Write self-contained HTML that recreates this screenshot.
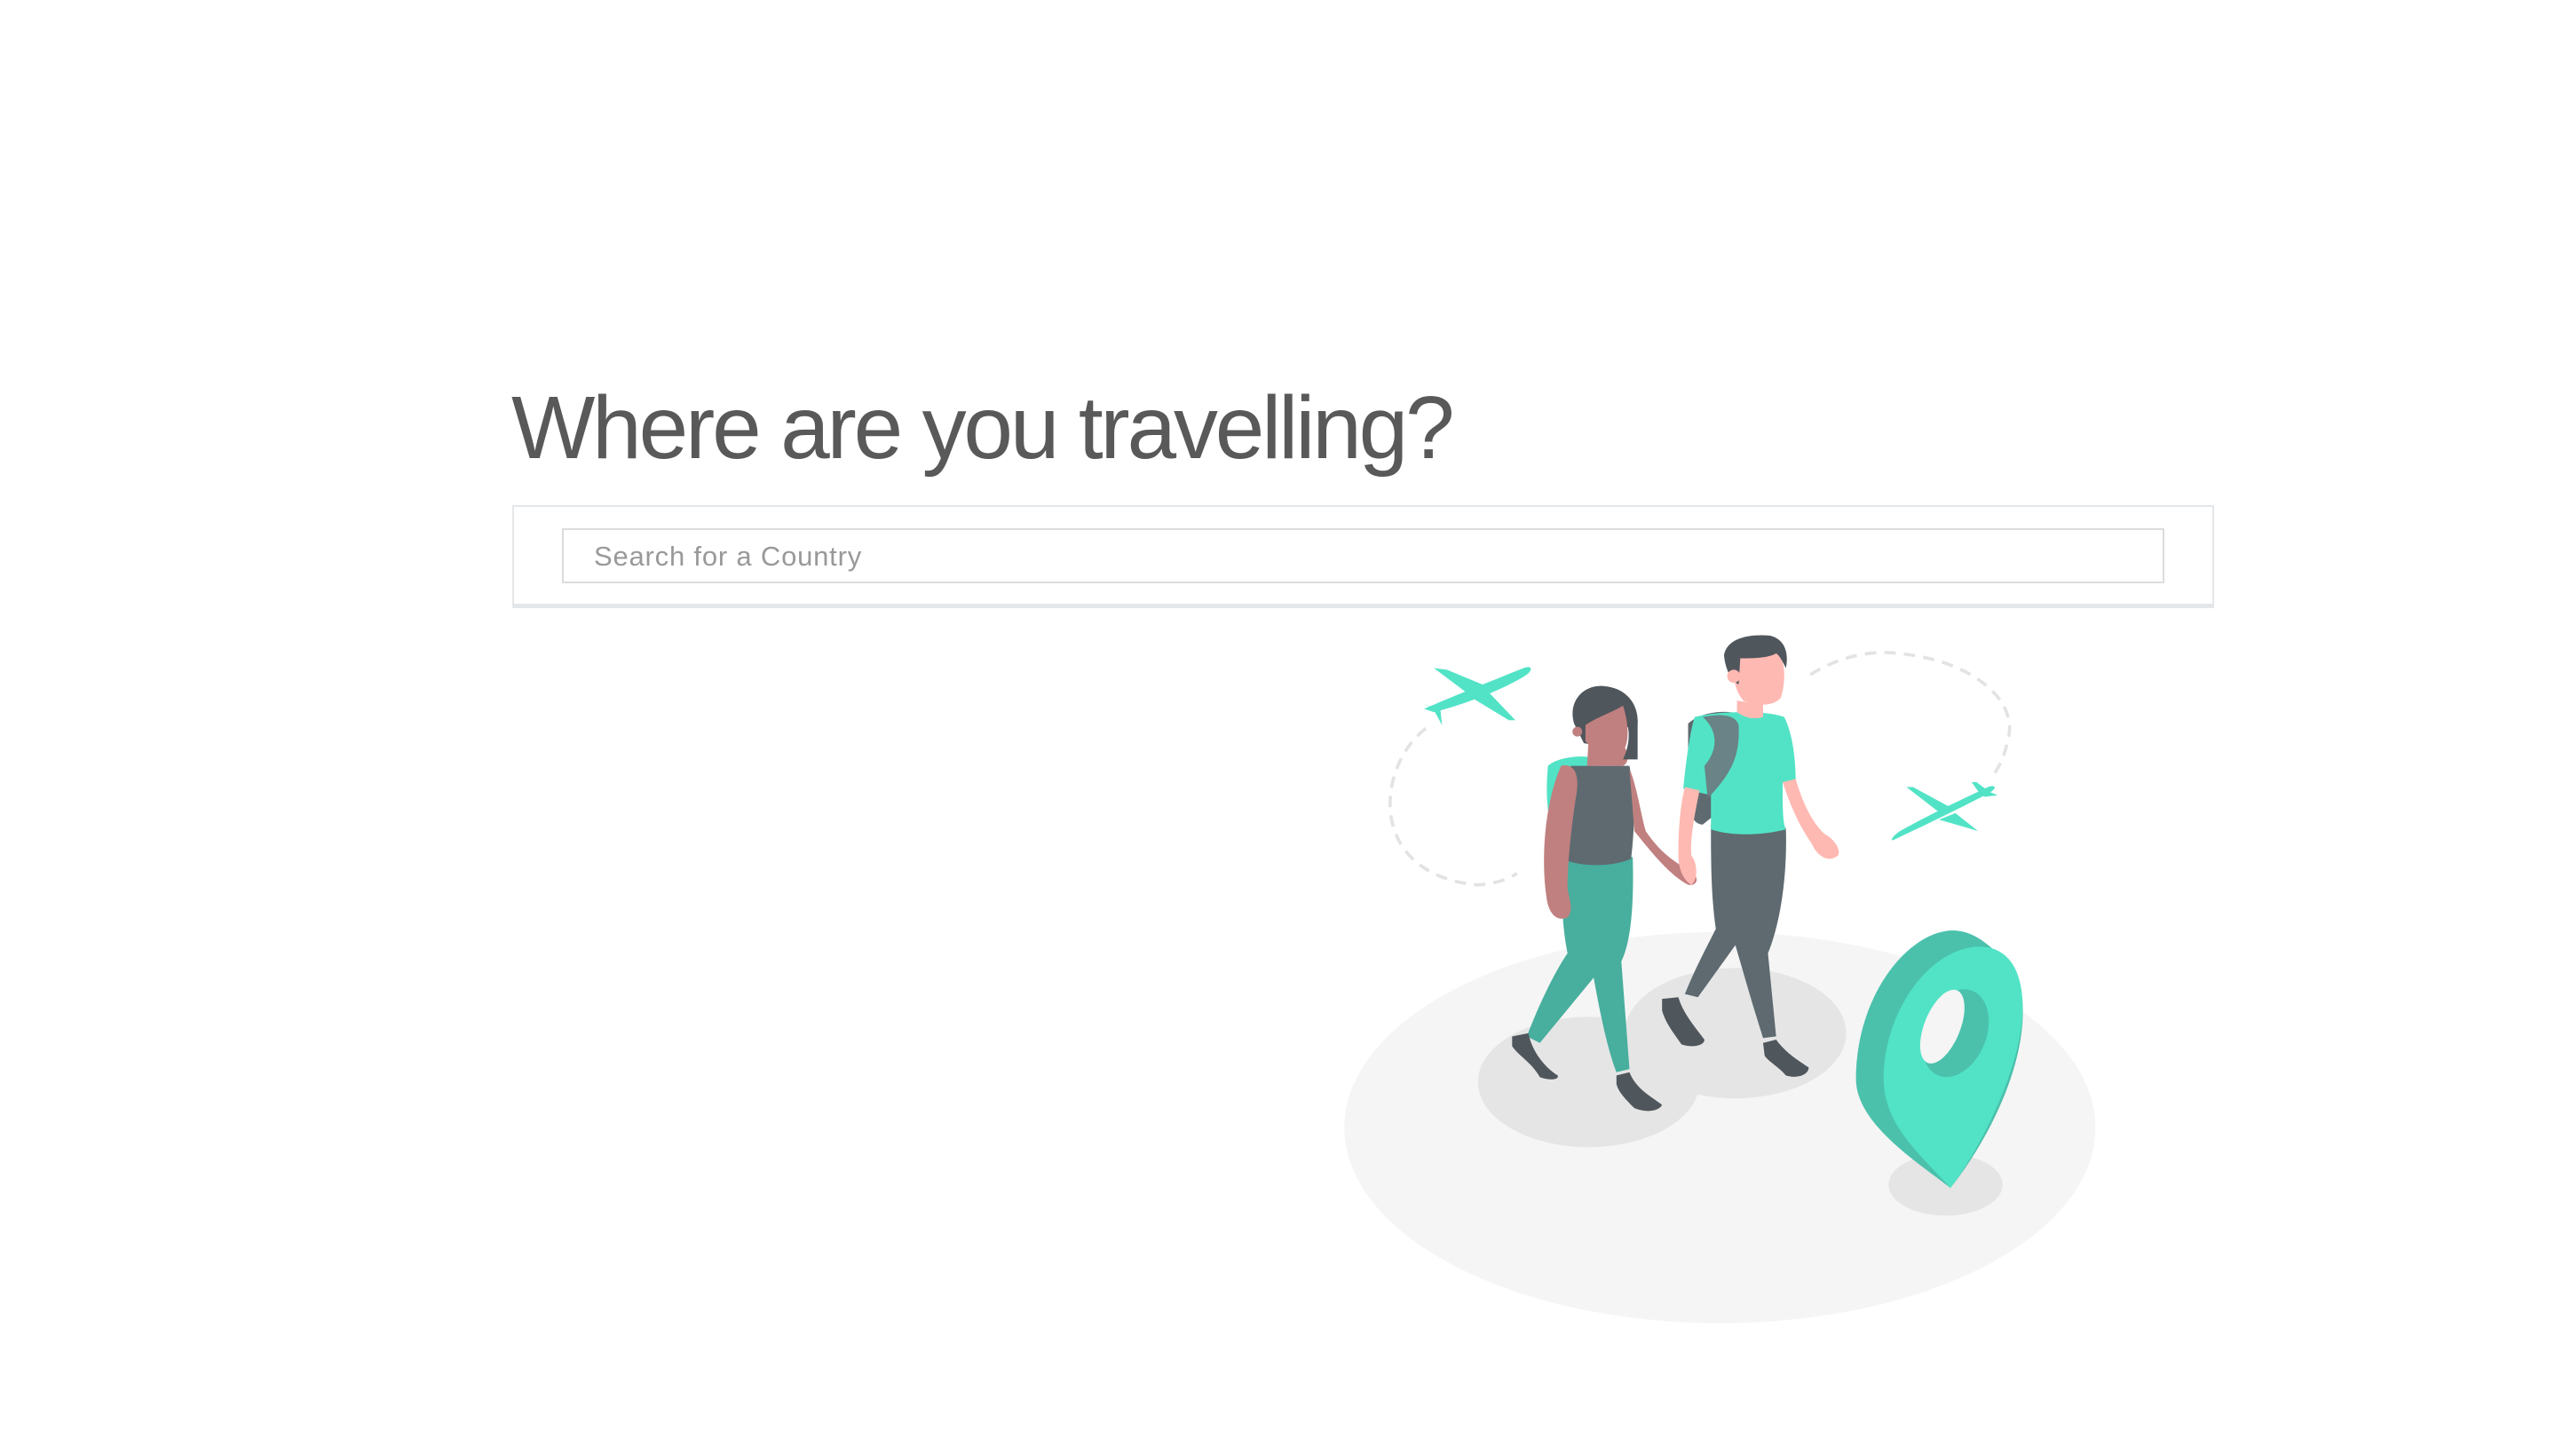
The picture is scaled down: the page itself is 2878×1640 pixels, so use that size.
<!DOCTYPE html>
<html><head><meta charset="utf-8"><style>
html,body{margin:0;padding:0;background:#fff;}
body{width:2878px;height:1640px;position:relative;overflow:hidden;font-family:"Liberation Sans",Arial,sans-serif;}
h1{position:absolute;left:576px;top:432px;margin:0;font-size:100px;line-height:100px;font-weight:normal;color:#595959;letter-spacing:-3.2px;white-space:nowrap;}
.box{position:absolute;left:577px;top:569px;width:1913px;height:109px;border:2px solid #e4e7ea;border-bottom-width:5px;background:#fff;}
.inp{position:absolute;left:633px;top:595px;width:1801px;height:58px;border:2px solid #dcdcdc;background:#fff;}
.ph{position:absolute;left:669px;top:611px;font-size:31px;line-height:31px;color:#999;white-space:nowrap;letter-spacing:0.8px;}
svg{position:absolute;left:0;top:0;}
</style></head><body>
<svg width="2878" height="1640" viewBox="0 0 1568 893.5">
  <ellipse cx="1055.5" cy="692" rx="230.5" ry="120" fill="#f5f5f5"/>
  <ellipse cx="975" cy="664" rx="68" ry="40" fill="#e5e5e5"/>
  <ellipse cx="1065" cy="634" rx="68" ry="40" fill="#e5e5e5"/>
  <ellipse cx="1194" cy="727" rx="35" ry="19" fill="#e5e5e5"/>
  <path d="M875,447 C845,470 838,535 905,543 C915,543 925,540 931,536" fill="none" stroke="#e3e3e3" stroke-width="2" stroke-dasharray="7 5"/>
  <path d="M1111,414 C1130,402 1150,399 1165,401 C1210,405 1240,430 1232,455 C1230,465 1226,472 1223,476" fill="none" stroke="#e3e3e3" stroke-width="2" stroke-dasharray="7 5"/>
  <g fill="#52e3c6">
    <path d="M874,435 C890,428 920,416 935,410 C940,408 941,411 937,414 C925,422 900,432 880,437 Z"/>
    <path d="M900,425 L880,410 L888,411 L912,421 Z"/>
    <path d="M910,421 L930,442 L926,442 L903,428 Z"/>
    <path d="M880,434 L873,432 L879,434 L885,445 L884,436 Z"/>
  </g>
  <g fill="#52e3c6">
    <path d="M1163,515 C1178,508 1205,495 1220,487 C1226,484 1225,481 1220,483 C1205,490 1180,502 1166,510 C1160,514 1160,517 1163,515 Z"/>
    <path d="M1192,500 L1170,483 L1174,483 L1198,496 Z"/>
    <path d="M1190,503 L1221,512 L1214,510 L1200,499 Z"/>
    <path d="M1215,487 L1210,480 L1213,480 L1221,486 L1226,488 L1218,489 Z"/>
  </g>
  <path d="M1139,662 C1139,612 1170,572 1198,571 C1210,571 1218,578 1226,585 L1241,612 C1245,652 1220,700 1197,729 C1178,714 1139,690 1139,662 Z" fill="#4bc1ac"/>
  <path d="M1156,662 C1156,620 1185,581 1215,581 C1235,581 1243,600 1241,625 C1238,660 1215,705 1197,729 C1178,708 1156,690 1156,662 Z" fill="#52e3c6"/>
  <ellipse cx="1200" cy="634" rx="19" ry="28" transform="rotate(22 1200 634)" fill="#4bc1ac"/>
  <ellipse cx="1192" cy="630" rx="11" ry="24" transform="rotate(22 1192 630)" fill="#f5f5f5"/>
  <path d="M950,470 C955,465 970,463 978,465 L976,522 L958,522 C950,510 948,490 950,470 Z" fill="#52e3c6"/>
  <path d="M960,520 L1002,526 C1003,560 1000,580 995,590 L1000,656 L992,658 C985,640 980,610 978,600 L945,640 L937,636 C945,615 955,595 962,585 C958,565 958,545 960,520 Z" fill="#48ae9e"/>
  <path d="M964,470 L1000,470 C1004,490 1003,510 1001,527 C990,532 972,532 961,528 C963,510 962,490 964,470 Z" fill="#5e6a70"/>
  <path d="M958,470 C966,468 970,475 967,490 C964,510 962,530 962,545 C963,552 966,558 962,563 C955,566 950,560 949,550 C946,530 947,495 958,470 Z" fill="#c0807f"/>
  <path d="M1000,472 C1004,480 1007,500 1010,510 C1020,525 1030,530 1038,535 C1043,538 1042,544 1036,543 C1025,537 1015,525 1003,510 Z" fill="#c0807f"/>
  <path d="M975,452 C980,450 990,453 995,455 C1000,462 1000,468 996,470 L974,470 Z" fill="#c0807f"/>
  <path d="M966,444 C962,430 972,420 984,421 C998,422 1006,432 1005,445 L1005,466 L996,466 C1000,458 1000,450 999,446 C990,455 980,458 972,456 Z" fill="#4f565c"/>
  <path d="M973,445 C980,440 990,437 996,433 C1000,445 1000,458 995,462 C985,464 978,460 973,455 Z" fill="#c0807f"/>
  <circle cx="968" cy="449" r="3" fill="#c0807f"/>
  <path d="M928,636 L938,634 C940,645 948,655 956,660 C957,663 950,663 945,661 C940,652 932,648 928,642 Z" fill="#4f565c"/>
  <path d="M992,660 L1000,658 C1004,668 1012,672 1020,678 C1018,682 1010,683 1003,680 C998,675 993,670 992,665 Z" fill="#4f565c"/>
  <path d="M1036,444 C1045,436 1060,436 1067,438 L1067,490 C1060,495 1052,500 1045,506 C1040,506 1036,500 1036,490 Z" fill="#5e6a70"/>
  <path d="M1050,506 L1096,508 C1097,540 1092,568 1085,585 L1090,636 L1082,637 C1075,615 1068,590 1065,580 L1042,612 L1034,610 C1040,595 1048,580 1053,570 C1050,550 1050,525 1050,506 Z" fill="#5e6a70"/>
  <path d="M1040,440 C1055,436 1085,436 1095,440 C1100,450 1102,465 1102,480 L1094,480 C1094,495 1094,505 1096,509 C1080,513 1062,513 1050,509 L1050,488 L1033,484 C1035,465 1037,450 1040,440 Z" fill="#52e3c6"/>
  <path d="M1045,440 C1055,438 1065,438 1067,445 C1068,465 1062,475 1048,490 L1046,470 C1053,462 1056,450 1045,440 Z" fill="#6b787e" opacity="0.9"/>
  <path d="M1034,483 L1043,485 C1040,500 1037,515 1038,525 C1042,530 1042,540 1038,543 C1033,540 1030,533 1030,525 C1030,510 1031,495 1034,483 Z" fill="#ffb9b3"/>
  <path d="M1094,480 L1102,478 C1106,492 1112,505 1120,512 C1126,515 1130,522 1128,525 C1122,530 1115,525 1112,518 C1103,505 1098,492 1094,480 Z" fill="#ffb9b3"/>
  <path d="M1066,430 L1082,432 L1082,440 C1076,442 1070,440 1066,437 Z" fill="#ffb9b3"/>
  <path d="M1064,405 C1066,398 1078,396 1090,398 C1096,405 1096,418 1093,428 C1088,434 1078,433 1070,430 C1065,425 1063,415 1064,405 Z" fill="#ffb9b3"/>
  <path d="M1058,402 C1060,392 1072,389 1086,390 C1095,392 1098,400 1096,410 C1094,406 1092,402 1090,401 C1085,404 1075,404 1068,404 L1067,420 C1063,418 1059,412 1058,402 Z" fill="#4f565c"/>
  <circle cx="1064" cy="415" r="4" fill="#ffb9b3"/>
  <path d="M1020,613 L1030,612 C1033,622 1040,630 1046,638 C1046,642 1038,643 1032,641 C1028,635 1022,628 1020,620 Z" fill="#4f565c"/>
  <path d="M1082,640 L1090,638 C1095,645 1102,650 1110,655 C1110,660 1102,662 1096,660 C1092,655 1086,652 1083,648 Z" fill="#4f565c"/>
</svg>
<h1>Where are you travelling?</h1>
<div class="box"></div>
<div class="inp"></div>
<div class="ph">Search for a Country</div>
</body></html>
